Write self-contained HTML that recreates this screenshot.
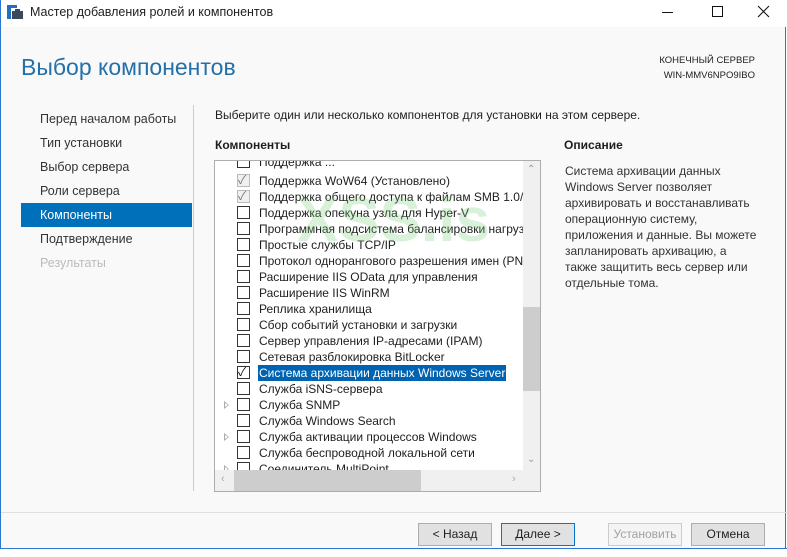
<!DOCTYPE html>
<html><head><meta charset="utf-8">
<style>
*{margin:0;padding:0;box-sizing:border-box}
body{width:787px;height:557px;overflow:hidden;background:#fff;font-family:"Liberation Sans","Noto Sans CJK SC",sans-serif;color:#1e1e1e;position:relative;font-size:12px}
.a{position:absolute;white-space:nowrap}
#win{position:absolute;left:0;top:0;width:786px;height:548px;background:#f9f9f9;border-left:1px solid #2b78d4;border-right:1px solid #2b78d4}
#title{position:absolute;left:0;top:0;width:786px;height:27px;background:#fff}
.nav{position:absolute;left:39px;font-size:12.5px;color:#333}
.row{position:absolute;left:0;height:16px;width:310px;font-size:12px;line-height:16px}
.cb{position:absolute;left:22px;top:1px;width:13px;height:13px;border:1px solid #333;background:#fff}
.cb.g{border-color:#bbb;background:#f0f0f0}
.row span.t{position:absolute;left:43px;top:0;padding:0 1px}
.row span.ck{position:absolute;left:23px;top:-1px;font-size:12px}
.exp{position:absolute;left:9px;top:4px;width:0;height:0;border-left:5px solid #aaa;border-top:4px solid transparent;border-bottom:4px solid transparent}
.exp:after{content:"";position:absolute;left:-4px;top:-2px;border-left:3px solid #fff;border-top:2px solid transparent;border-bottom:2px solid transparent}
.btn{position:absolute;top:523px;width:74px;height:23px;border:1px solid #adadad;background:#e1e1e1;font-size:12px;text-align:center;line-height:21px}
</style></head><body>
<div id="win">
<div id="title">
 <svg class="a" style="left:6px;top:5px" width="16" height="14"><rect x="0" y="0" width="4" height="14" fill="#1e70c0"/><rect x="4" y="0" width="6" height="3" fill="#1e70c0"/><rect x="5" y="6" width="11" height="8" fill="#3a4a5a"/><rect x="8" y="4" width="5" height="2" fill="#3a4a5a"/></svg>
 <div class="a" style="left:29px;top:5px;font-size:12.5px">Мастер добавления ролей и компонентов</div>
 <div class="a" style="left:661px;top:12px;width:11px;height:1px;background:#111"></div>
 <div class="a" style="left:711px;top:6px;width:11px;height:11px;border:1px solid #111"></div>
 <svg class="a" style="left:756px;top:5px" width="13" height="13"><path d="M1 1L12 12M12 1L1 12" stroke="#111" stroke-width="1.1"/></svg>
</div>
<div class="a" style="left:20px;top:54px;font-size:23px;color:#2470a8">Выбор компонентов</div>
<div class="a" style="right:30px;top:53px;font-size:9.5px;text-align:right;line-height:15px;color:#222">КОНЕЧНЫЙ СЕРВЕР<br>WIN-MMV6NPO9IBO</div>
<div class="a" style="left:192px;top:105px;width:1px;height:386px;background:#ccc"></div>
<div class="nav" style="top:112px">Перед началом работы</div>
<div class="nav" style="top:136px">Тип установки</div>
<div class="nav" style="top:160px">Выбор сервера</div>
<div class="nav" style="top:184px">Роли сервера</div>
<div class="a" style="left:20px;top:203px;width:171px;height:24px;background:#0070bb"></div>
<div class="nav" style="top:208px;color:#fff">Компоненты</div>
<div class="nav" style="top:232px">Подтверждение</div>
<div class="nav" style="top:256px;color:#bbb">Результаты</div>
<div class="a" style="left:214px;top:108px;font-size:12px">Выберите один или несколько компонентов для установки на этом сервере.</div>
<div class="a" style="left:214px;top:138px;font-size:12px;font-weight:bold">Компоненты</div>
<div class="a" style="left:563px;top:138px;font-size:12px;font-weight:bold">Описание</div>
<div class="a" style="left:564px;top:163px;font-size:12px;line-height:16px;white-space:normal;width:192px;color:#333">Система архивации данных Windows Server позволяет архивировать и восстанавливать операционную систему, приложения и данные. Вы можете запланировать архивацию, а также защитить весь сервер или отдельные тома.</div>
<div class="a" style="left:213px;top:160px;width:327px;height:332px;border:1px solid #adadad;background:#fff;overflow:hidden">
 <div style="position:absolute;left:0;top:0;width:308px;height:309px;overflow:hidden">
  <div class="row" style="top:-7px"><div class="cb"></div><span class="t">Поддержка ...</span></div>
  <div class="row" style="top:12px"><div class="cb g"></div><span class="ck" style="color:#777">&#10003;</span><span class="t">Поддержка WoW64 (Установлено)</span></div>
  <div class="row" style="top:28px"><div class="cb g"></div><span class="ck" style="color:#777">&#10003;</span><span class="t">Поддержка общего доступа к файлам SMB 1.0/CIFS</span></div>
  <div class="row" style="top:44px"><div class="cb"></div><span class="t">Поддержка опекуна узла для Hyper-V</span></div>
  <div class="row" style="top:60px"><div class="cb"></div><span class="t">Программная подсистема балансировки нагрузки</span></div>
  <div class="row" style="top:76px"><div class="cb"></div><span class="t">Простые службы TCP/IP</span></div>
  <div class="row" style="top:92px"><div class="cb"></div><span class="t">Протокол однорангового разрешения имен (PNRP)</span></div>
  <div class="row" style="top:108px"><div class="cb"></div><span class="t">Расширение IIS OData для управления</span></div>
  <div class="row" style="top:124px"><div class="cb"></div><span class="t">Расширение IIS WinRM</span></div>
  <div class="row" style="top:140px"><div class="cb"></div><span class="t">Реплика хранилища</span></div>
  <div class="row" style="top:156px"><div class="cb"></div><span class="t">Сбор событий установки и загрузки</span></div>
  <div class="row" style="top:172px"><div class="cb"></div><span class="t">Сервер управления IP-адресами (IPAM)</span></div>
  <div class="row" style="top:188px"><div class="cb"></div><span class="t">Сетевая разблокировка BitLocker</span></div>
  <div class="row" style="top:204px"><div class="cb"></div><span class="ck" style="color:#111">&#10003;</span><span class="t" style="background:#0063b1;color:#fff">Система архивации данных Windows Server</span></div>
  <div class="row" style="top:220px"><div class="cb"></div><span class="t">Служба iSNS-сервера</span></div>
  <div class="row" style="top:236px"><div class="exp"></div><div class="cb"></div><span class="t">Служба SNMP</span></div>
  <div class="row" style="top:252px"><div class="cb"></div><span class="t">Служба Windows Search</span></div>
  <div class="row" style="top:268px"><div class="exp"></div><div class="cb"></div><span class="t">Служба активации процессов Windows</span></div>
  <div class="row" style="top:284px"><div class="cb"></div><span class="t">Служба беспроводной локальной сети</span></div>
  <div class="row" style="top:300px"><div class="exp"></div><div class="cb"></div><span class="t">Соединитель MultiPoint</span></div>
 </div>
 <div style="position:absolute;left:308px;top:0;width:17px;height:309px;background:#f0f0f0">
  <div style="position:absolute;left:0;top:146px;width:17px;height:84px;background:#cdcdcd"></div>
  <div style="position:absolute;left:4px;top:3px;font-size:10px;color:#999">&#8963;</div>
  <div style="position:absolute;left:4px;top:293px;font-size:10px;color:#999">&#8964;</div>
 </div>
 <div style="position:absolute;left:0;top:309px;width:325px;height:21px;background:#f0f0f0">
  <div style="position:absolute;left:19px;top:0;width:187px;height:21px;background:#cdcdcd"></div>
  <div style="position:absolute;left:6px;top:3px;font-size:11px;color:#aaa">&lsaquo;</div>
  <div style="position:absolute;left:297px;top:3px;font-size:11px;color:#aaa">&rsaquo;</div>
 </div>
</div>
<div class="a" style="left:296px;top:185px;font-size:62px;font-weight:bold;color:rgba(120,200,120,0.28)">XSS.is</div>
<div class="a" style="left:0;top:512px;width:786px;height:1px;background:#dfdfdf"></div>
<div class="btn" style="left:417px">&lt; Назад</div>
<div class="btn" style="left:500px;border-color:#0078d7">Далее &gt;</div>
<div class="btn" style="left:607px;border-color:#ccc;background:#f4f4f4;color:#a0a0a0">Установить</div>
<div class="btn" style="left:690px">Отмена</div>
</div>
<div class="a" style="left:0;top:548px;width:787px;height:9px;background:#fff;border-top:1px solid #2b78d4"></div>
</body></html>
